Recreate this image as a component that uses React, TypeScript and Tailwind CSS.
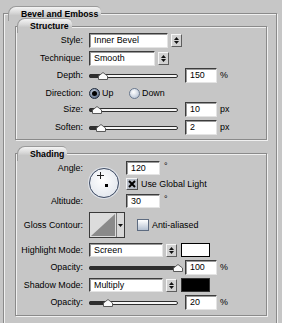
import type { ReactNode } from 'react'

// etched group frame: dark line with a light line offset by one pixel
const etched = 'border border-[#8a8a8a] shadow-[inset_1px_1px_0_#f0f0f0,1px_1px_0_#f0f0f0]'

function Legend({ children, className = '' }: { children: ReactNode; className?: string }) {
    return (
        <div
            className={`relative flex h-[15px] items-center self-start rounded-tl-[8px] rounded-tr-[5px] border-t border-l border-t-[#9a9a9a] border-l-[#9a9a9a] bg-[linear-gradient(to_bottom,#f4f4f4,#d8d8d8_40%,#c6c6c6_60%)] pr-[3px] pl-[12px] text-[8.7px] font-bold ${className}`}
        >
            {children}
        </div>
    )
}

function Label({ children }: { children: ReactNode }) {
    return <div className="w-[67px] shrink-0 text-right">{children}</div>
}

function Field({ value, width, height = 15 }: { value: string; width: number; height?: number }) {
    return (
        <div
            className="flex items-center border border-t-[#3c3c3c] border-l-[#3c3c3c] border-r-[#e4e4e4] border-b-[#e4e4e4] bg-white pl-[4px] shadow-[inset_1px_1px_0_#9a9a9a]"
            style={{ width, height }}
        >
            {value}
        </div>
    )
}

function Spin() {
    return (
        <div className="ml-[3px] flex h-[13px] w-[11px] flex-col items-center justify-center gap-[1px] border border-t-[#f6f6f6] border-l-[#f6f6f6] border-r-[#5e5e5e] border-b-[#5e5e5e] bg-[#d2d2d2]">
            <svg width="5" height="3" viewBox="0 0 5 3">
                <path d="M0 3L2.5 0L5 3Z" fill="#111" />
            </svg>
            <svg width="5" height="3" viewBox="0 0 5 3">
                <path d="M0 0L2.5 3L5 0Z" fill="#111" />
            </svg>
        </div>
    )
}

function Slider({ pos }: { pos: number }) {
    return (
        <div className="relative ml-[2px] h-[15px] w-[89px] shrink-0">
            <div className="absolute top-[6px] right-0 left-0 h-[4px] rounded-full border border-[#2e2e2e] bg-[#f6f6f6]" />
            <div className="absolute top-[6px] left-0 h-[4px] rounded-l-full bg-[#2e2e2e]" style={{ width: pos }} />
            <svg className="absolute top-[4px]" style={{ left: pos - 5 }} width="10" height="8" viewBox="0 0 10 8">
                <path d="M0.5 7.5V4L5 0.5L9.5 4V7.5Z" fill="#fafafa" stroke="#5a5a5a" />
            </svg>
        </div>
    )
}

function Radio({ on }: { on?: boolean }) {
    return (
        <span
            className={`flex h-[11px] w-[11px] shrink-0 items-center justify-center rounded-full border ${
                on
                    ? 'border-[#1e2a3c] bg-[radial-gradient(circle_at_40%_35%,#c9d3e2,#42536e)]'
                    : 'border-[#6b7a90] bg-[radial-gradient(circle_at_40%_35%,#ffffff,#a9b7cb)]'
            }`}
        >
            {on && <span className="h-[5px] w-[5px] rounded-full bg-black" />}
        </span>
    )
}

function SliderRow({ label, pos, value, unit, className = '' }: { label: string; pos: number; value: string; unit: string; className?: string }) {
    return (
        <div className={`flex h-[15px] items-center ${className}`}>
            <Label>{label}</Label>
            <div className="ml-[4px] flex items-center">
                <Slider pos={pos} />
                <div className="ml-[7px]">
                    <Field value={value} width={32} />
                </div>
                <span className="ml-[3px]">{unit}</span>
            </div>
        </div>
    )
}

export default function App() {
    return (
        <div className="h-[323px] w-[282px] overflow-hidden bg-[#c6c6c6] pt-[13px] pl-[3px] font-['Liberation_Sans',Arial,sans-serif] text-[8.9px] leading-none text-black">
            {/* Bevel and Emboss */}
            <div className={`flex h-[330px] w-[274px] flex-col ${etched}`}>
                <Legend className="-mt-[8px] ml-[4px]">Bevel and Emboss</Legend>

                {/* Structure */}
                <div className={`mt-[5px] ml-[11px] flex h-[114px] w-[252px] flex-col ${etched}`}>
                    <Legend className="-mt-[9px] ml-[1px]">Structure</Legend>

                    <div className="flex h-[15px] items-center">
                        <Label>Style:</Label>
                        <div className="ml-[6px] flex items-center">
                            <Field value="Inner Bevel" width={79} />
                            <Spin />
                        </div>
                    </div>

                    <div className="mt-[3px] flex h-[15px] items-center">
                        <Label>Technique:</Label>
                        <div className="ml-[6px] flex items-center">
                            <Field value="Smooth" width={66} />
                            <Spin />
                        </div>
                    </div>

                    <SliderRow className="mt-[2px]" label="Depth:" pos={14} value="150" unit="%" />

                    <div className="mt-[3px] flex h-[15px] items-center">
                        <Label>Direction:</Label>
                        <div className="ml-[6px] flex items-center">
                            <Radio on />
                            <span className="ml-[2px] w-[27px]">Up</span>
                            <Radio />
                            <span className="ml-[2px]">Down</span>
                        </div>
                    </div>

                    <SliderRow className="mt-[1px]" label="Size:" pos={8} value="10" unit="px" />
                    <SliderRow className="mt-[3px]" label="Soften:" pos={12} value="2" unit="px" />
                </div>

                {/* Shading */}
                <div className={`mt-[13px] ml-[11px] flex h-[163px] w-[252px] flex-col ${etched}`}>
                    <Legend className="-mt-[8px] ml-[1px]">Shading</Legend>

                    <div className="flex">
                        <div className="flex h-[47px] w-[67px] shrink-0 flex-col justify-between text-right">
                            <div className="flex h-[14px] items-center justify-end">Angle:</div>
                            <div className="flex h-[14px] items-center justify-end">Altitude:</div>
                        </div>

                        {/* angle dial */}
                        <div className="relative mt-[7px] ml-[6px] h-[30px] w-[30px] rounded-full border border-[#3e4c66] bg-[radial-gradient(circle_at_45%_40%,#ffffff,#e6eaf0_70%,#c3cad6)] shadow-[0_0_0_1px_#dfe3ea]">
                            <svg className="absolute top-[3px] left-[7px]" width="7" height="7" viewBox="0 0 7 7">
                                <path d="M3.5 0V7M0 3.5H7" stroke="#222" strokeWidth="1" />
                            </svg>
                            <div className="absolute top-[15px] left-[15px] h-[3px] w-[3px] bg-black" />
                        </div>

                        <div className="ml-[7px] flex flex-col">
                            <div className="flex items-center">
                                <Field value="120" width={34} height={14} />
                                <span className="ml-[4px] -mt-[4px]">°</span>
                            </div>
                            <div className="mt-[3px] flex h-[12px] items-center">
                                <span className="flex h-[12px] w-[12px] items-center justify-center border border-t-[#f4f4f4] border-l-[#f4f4f4] border-r-[#505050] border-b-[#505050] bg-[#b8bec8]">
                                    <svg width="8" height="8" viewBox="0 0 8 8">
                                        <path d="M1 1L7 7M7 1L1 7" stroke="#000" strokeWidth="2" />
                                    </svg>
                                </span>
                                <span className="ml-[3px]">Use Global Light</span>
                            </div>
                            <div className="mt-[4px] flex items-center">
                                <Field value="30" width={34} height={14} />
                                <span className="ml-[4px] -mt-[4px]">°</span>
                            </div>
                        </div>
                    </div>

                    {/* Gloss contour */}
                    <div className="mt-[4px] flex h-[26px] items-center">
                        <Label>Gloss Contour:</Label>
                        <div className="ml-[6px] flex h-[26px] border border-[#3a3a3a]">
                            <svg width="26" height="24" viewBox="0 0 26 24">
                                <rect x="0" y="0" width="26" height="24" fill="#dcdcdc" />
                                <path d="M1 23L25 1V23Z" fill="#8a8a8a" />
                            </svg>
                            <div className="flex w-[8px] items-center justify-center border-l border-l-[#7a7a7a] bg-[#d8d8d8]">
                                <svg width="5" height="3" viewBox="0 0 5 3">
                                    <path d="M0 0L2.5 3L5 0Z" fill="#111" />
                                </svg>
                            </div>
                        </div>
                        <span className="ml-[12px] h-[12px] w-[12px] border border-[#5d6b80] bg-[linear-gradient(to_bottom,#ffffff,#b4c0d0)]" />
                        <span className="ml-[3px]">Anti-aliased</span>
                    </div>

                    <div className="mt-[5px] flex h-[14px] items-center">
                        <Label>Highlight Mode:</Label>
                        <div className="ml-[6px] flex items-center">
                            <Field value="Screen" width={74} height={14} />
                            <Spin />
                            <div className="ml-[4px] h-[14px] w-[29px] border border-black bg-white" />
                        </div>
                    </div>

                    <SliderRow className="mt-[3px]" label="Opacity:" pos={89} value="100" unit="%" />

                    <div className="mt-[3px] flex h-[14px] items-center">
                        <Label>Shadow Mode:</Label>
                        <div className="ml-[6px] flex items-center">
                            <Field value="Multiply" width={74} height={14} />
                            <Spin />
                            <div className="ml-[4px] h-[14px] w-[29px] border border-[#333] bg-black" />
                        </div>
                    </div>

                    <SliderRow className="mt-[3px]" label="Opacity:" pos={19} value="20" unit="%" />
                </div>
            </div>
        </div>
    )
}
